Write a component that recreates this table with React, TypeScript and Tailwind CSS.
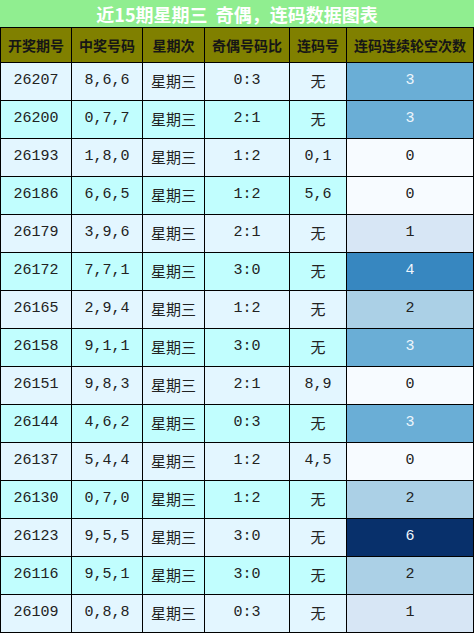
const rows: [string, string, string, string, number][] = [
  ["26207", "8,6,6", "0:3", "无", 3],
  ["26200", "0,7,7", "2:1", "无", 3],
  ["26193", "1,8,0", "1:2", "0,1", 0],
  ["26186", "6,6,5", "1:2", "5,6", 0],
  ["26179", "3,9,6", "2:1", "无", 1],
  ["26172", "7,7,1", "3:0", "无", 4],
  ["26165", "2,9,4", "1:2", "无", 2],
  ["26158", "9,1,1", "3:0", "无", 3],
  ["26151", "9,8,3", "2:1", "8,9", 0],
  ["26144", "4,6,2", "0:3", "无", 3],
  ["26137", "5,4,4", "1:2", "4,5", 0],
  ["26130", "0,7,0", "1:2", "无", 2],
  ["26123", "9,5,5", "3:0", "无", 6],
  ["26116", "9,5,1", "3:0", "无", 2],
  ["26109", "0,8,8", "0:3", "无", 1],
]

const headers = ["开奖期号", "中奖号码", "星期次", "奇偶号码比", "连码号", "连码连续轮空次数"]

// blues scale for the last column
const heat: Record<number, string> = {
  0: "bg-[#f7fbff] text-[#222]",
  1: "bg-[#d7e6f5] text-[#222]",
  2: "bg-[#abd0e6] text-[#222]",
  3: "bg-[#6aaed6] text-[#eef6fc]",
  4: "bg-[#3787c0] text-[#eef6fc]",
  6: "bg-[#08306b] text-[#eef6fc]",
}

const mono = "font-['Liberation_Mono','Noto_Sans_CJK_SC',monospace]"

export default function App() {
  return (
    <div className="w-[474px] h-[633px] bg-black font-['Noto_Sans_CJK_SC',sans-serif]">
      <div className="h-[27px] bg-[#90ee90] flex items-center justify-center text-white font-bold text-[18px] leading-none">
        近15期星期三&nbsp;&nbsp;奇偶，连码数据图表
      </div>
      <div className="grid grid-cols-[70px_70px_61px_84px_56px_1fr] gap-px p-px">
        {headers.map(h => (
          <div key={h} className="h-[34px] bg-[#808000] flex items-center justify-center font-bold text-[14px] text-[#161616]">
            {h}
          </div>
        ))}
        {rows.map((r, i) => {
          const bg = i % 2 === 0 ? "bg-[#e3f6ff]" : "bg-[#c1fefe]"
          const cell = `h-[37px] flex items-center justify-center text-[15px] text-[#222] ${bg} ${mono}`
          return [
            <div key={r[0] + "a"} className={cell}>{r[0]}</div>,
            <div key={r[0] + "b"} className={cell}>{r[1]}</div>,
            <div key={r[0] + "c"} className={`${cell} pt-[6px]`}>星期三</div>,
            <div key={r[0] + "d"} className={cell}>{r[2]}</div>,
            <div key={r[0] + "e"} className={r[3] === "无" ? `${cell} pt-[6px]` : cell}>{r[3]}</div>,
            <div key={r[0] + "f"} className={`h-[37px] flex items-center justify-center text-[15px] ${mono} ${heat[r[4]]}`}>{r[4]}</div>,
          ]
        })}
      </div>
    </div>
  )
}
